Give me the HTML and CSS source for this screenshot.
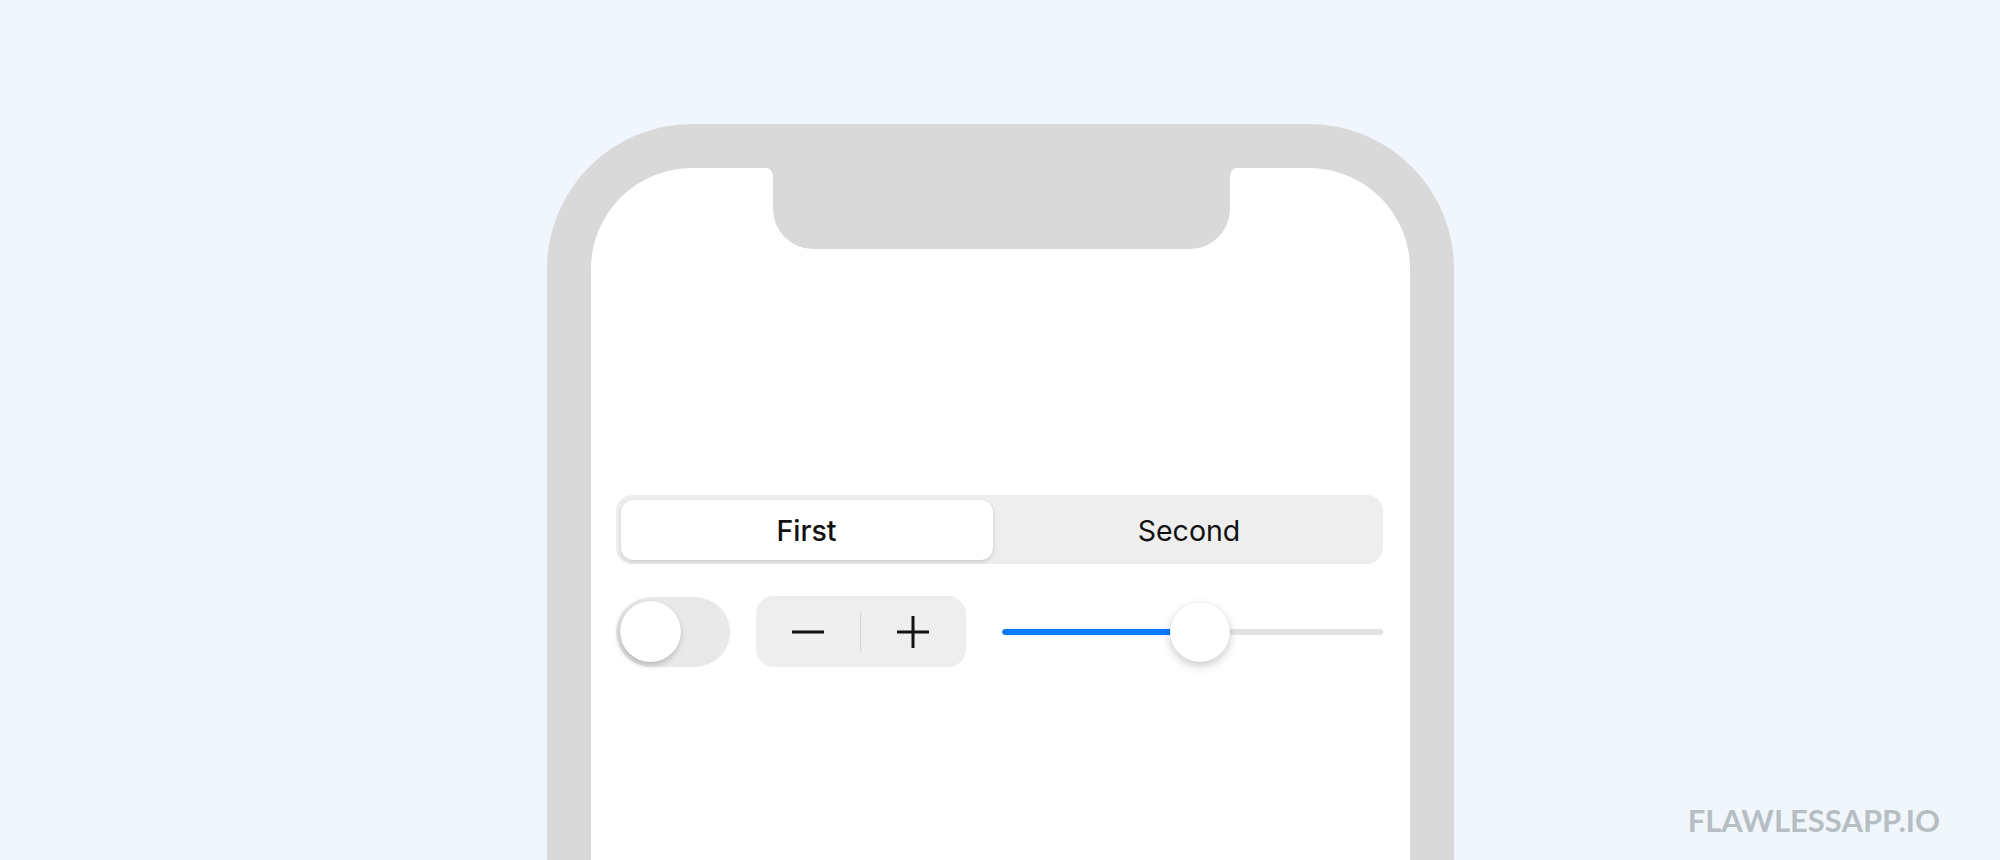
FILE: index.html
```html
<!DOCTYPE html>
<html lang="en">
<head>
<meta charset="utf-8">
<title>Controls</title>
<link rel="stylesheet" href="styles.css">
</head>
<body>
<div class="stage">
  <div class="phone">
    <div class="notch"></div>
    <div class="screen">
      <div class="segmented">
        <div class="seg seg-active">First</div>
        <div class="seg seg-second">Second</div>
      </div>
      <div class="controls">
        <div class="toggle"><div class="toggle-knob"></div></div>
        <div class="stepper">
          <div class="step">
            <svg width="34" height="34" viewBox="0 0 34 34"><line x1="1" y1="17" x2="33" y2="17" stroke="#111" stroke-width="3"/></svg>
          </div>
          <div class="step-divider"></div>
          <div class="step">
            <svg width="34" height="34" viewBox="0 0 34 34"><line x1="1" y1="17" x2="33" y2="17" stroke="#111" stroke-width="3"/><line x1="17" y1="1" x2="17" y2="33" stroke="#111" stroke-width="3"/></svg>
          </div>
        </div>
        <div class="slider">
          <div class="slider-track"><div class="slider-fill" style="width:52%"></div></div>
          <div class="slider-knob" style="left:52%"></div>
        </div>
      </div>
    </div>
  </div>
</div>
<div class="watermark">FLAWLESSAPP.IO</div>
</body>
</html>
```
FILE: styles.css
```css
html, body {
  margin: 0;
  padding: 0;
}
body {
  width: 2000px;
  height: 860px;
  overflow: hidden;
  background: #f1f6fc;
  font-family: Inter, "Noto Sans", sans-serif;
  position: relative;
}
.stage {
  display: flex;
  justify-content: center;
  padding-top: 124px;
}
.phone {
  box-sizing: border-box;
  width: 907px;
  height: 820px;
  border: 44px solid #d9d9d9;
  border-bottom: none;
  border-radius: 145px 145px 0 0;
  background: #ffffff;
  position: relative;
}
.notch {
  position: absolute;
  top: -1px;
  left: 50%;
  margin-left: -227px;
  width: 457px;
  height: 82px;
  background: #d9d9d9;
  border-radius: 0 0 40px 40px;
}
.notch::before,
.notch::after {
  content: "";
  position: absolute;
  top: 0;
  width: 9px;
  height: 9px;
}
.notch::before {
  left: -9px;
  background: radial-gradient(circle at 0 100%, transparent 8.5px, #d9d9d9 9px);
}
.notch::after {
  right: -9px;
  background: radial-gradient(circle at 100% 100%, transparent 8.5px, #d9d9d9 9px);
}
.screen {
  padding: 327px 27px 0 25px;
}
.segmented {
  display: grid;
  grid-template-columns: 372px 1fr;
  height: 69px;
  box-sizing: border-box;
  padding: 5px 5px 4px 5px;
  background: #eeeeef;
  border-radius: 16px;
}
.seg {
  display: flex;
  align-items: center;
  justify-content: center;
  font-size: 28.5px;
  font-weight: 400;
  color: #111;
}
.seg-second {
  padding-left: 8px;
}
.seg-active {
  background: #ffffff;
  border-radius: 12px;
  font-weight: 500;
  box-shadow: 0 2px 4px rgba(0,0,0,0.14), 0 0 1px rgba(0,0,0,0.1);
}
.controls {
  display: flex;
  align-items: center;
  margin-top: 32px;
  height: 71px;
}
.toggle {
  width: 114px;
  height: 70px;
  border-radius: 35px;
  background: #e9e9ea;
  display: flex;
  align-items: center;
  padding-left: 4px;
  box-sizing: border-box;
}
.toggle-knob {
  width: 61px;
  height: 61px;
  border-radius: 50%;
  background: #fff;
  box-shadow: -1px 3px 6px rgba(0,0,0,0.22), 0 0 1px rgba(0,0,0,0.1);
}
.stepper {
  margin-left: 26px;
  width: 210px;
  height: 71px;
  border-radius: 18px;
  background: #eeeeef;
  display: flex;
  align-items: center;
}
.step {
  flex: 1;
  display: flex;
  align-items: center;
  justify-content: center;
}
.step svg { display: block; }
.step-divider {
  width: 1px;
  height: 38px;
  background: #d2d2d4;
}
.slider {
  margin-left: 36px;
  flex: 1;
  position: relative;
  height: 71px;
  display: flex;
  align-items: center;
}
.slider-track {
  width: 100%;
  height: 6px;
  border-radius: 3px;
  background: #e3e3e5;
  overflow: hidden;
}
.slider-fill {
  height: 100%;
  background: #0a7aff;
  border-radius: 3px;
}
.slider-knob {
  position: absolute;
  top: 50%;
  width: 60px;
  height: 60px;
  margin-left: -30px;
  margin-top: -30px;
  border-radius: 50%;
  background: #fff;
  box-shadow: 0 4px 10px rgba(0,0,0,0.2), 0 0 1px rgba(0,0,0,0.15);
}
.watermark {
  position: absolute;
  right: 60px;
  top: 801px;
  font-family: Lato, sans-serif;
  font-weight: 700;
  font-size: 31px;
  color: #b7bec3;
  letter-spacing: 0;
}
```
